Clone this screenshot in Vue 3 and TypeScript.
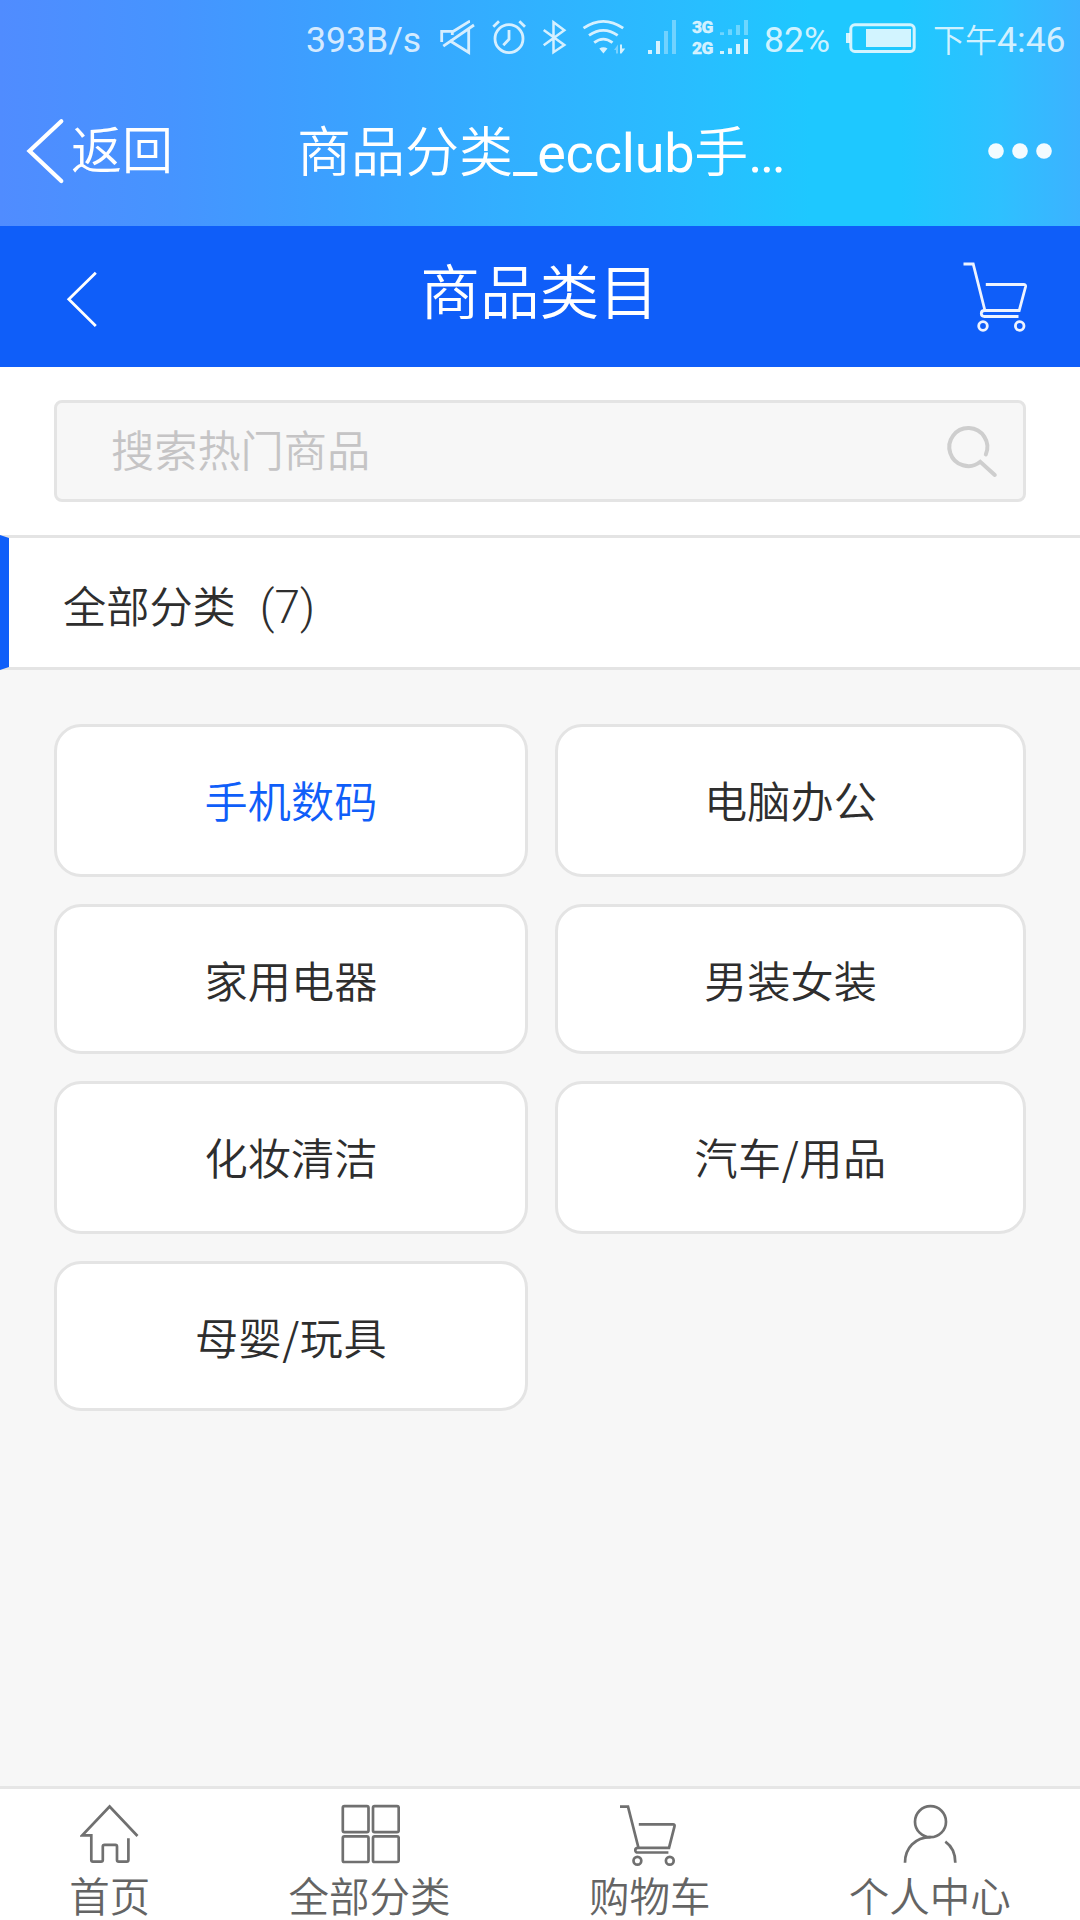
<script setup lang="ts">
import { ref } from 'vue'

interface Category {
  id: number
  name: string
}

const categories: Category[] = [
  { id: 1, name: '手机数码' },
  { id: 2, name: '电脑办公' },
  { id: 3, name: '家用电器' },
  { id: 4, name: '男装女装' },
  { id: 5, name: '化妆清洁' },
  { id: 6, name: '汽车/用品' },
  { id: 7, name: '母婴/玩具' },
]
const activeId = ref<number>(1)
</script>

<template>
  <div class="page">
    <div class="top">
      <div class="status">
        <span class="speed">393B/s</span>
        <svg class="icons" width="316" height="60" viewBox="436 8 316 60" fill="none" stroke="currentColor" stroke-width="2.8">
          <path d="M441.7 42V31.3H452.3V35M452.3 32L469 21.6H470M443.3 46.2L474 25M468.7 28V52.5L449.5 40.5" />
          <circle cx="509" cy="38.7" r="14" />
          <path d="M509 30V39.3L503.3 45.3M493.3 26.7L499 21.3M519.3 21.3L525 26.7" />
          <path d="M543.7 30L564.3 45L553.5 52.2V22.2L564.3 30.3L543.7 45.3" stroke-width="2.5" />
          <path d="M583.5 28.2Q603.3 14.5 623.2 28.2M589 35.3Q603.3 25.4 617.7 35.3M594.2 42.7Q603.3 35.6 612.5 42.7" />
          <path d="M599.3 48.5Q603.3 46 607.5 48.5L603.4 53.5Z" fill="currentColor" stroke="none" />
          <path d="M614 50L618 44.5V53.5H616V50Z" fill="currentColor" stroke="none" opacity=".45" />
          <path d="M620 44.5H622V48.5H625.2L621.5 53.5H620Z" fill="currentColor" stroke="none" />
          <g fill="currentColor" stroke="none">
            <path d="M648 50h4v4h-4zM656 41h4v13h-4z" />
            <path d="M664 31h4v23h-4zM672 20h4v34h-4z" opacity=".42" />
            <path d="M720 32.3h4v2.6h-4zM728 29.3h4v5.6h-4zM736 25h4v9.9h-4zM744 20h4v14.9h-4z" opacity=".42" />
            <path d="M720 51h4v3h-4zM728 48.3h4v5.7h-4zM736 44h4v10h-4zM744 39h4v15h-4z" />
            <text x="692" y="33" class="net">3G</text>
            <text x="692" y="54" class="net">2G</text>
          </g>
        </svg>
        <span class="percent">82%</span>
        <svg class="battery" width="72" height="32" viewBox="845 21 72 32">
          <rect x="850.8" y="23.8" width="63.4" height="26.6" rx="4" fill="none" stroke="currentColor" stroke-width="3" />
          <path d="M846 32h4v10h-4zM866 28h45v18h-45z" fill="currentColor" />
        </svg>
        <span class="time"><span class="noon">下午</span>4:46</span>
      </div>
      <div class="nav">
        <svg width="40" height="68" viewBox="26 117 40 68" fill="none" stroke="#fff" stroke-width="4.2" stroke-linecap="round">
          <path d="M61.3 121.3L29.5 151L61.3 181" />
        </svg>
        <span class="back">返回</span>
        <span class="title">商品分类<span class="latin">_ecclub</span>手<span class="dots">...</span></span>
        <svg class="more" width="66" height="18" viewBox="987 142 66 18" fill="#fff" fill-opacity=".94">
          <circle cx="996" cy="151" r="7.8" /><circle cx="1020" cy="151" r="7.8" /><circle cx="1044" cy="151" r="7.8" />
        </svg>
      </div>
    </div>

    <header class="header">
      <svg class="prev" width="32" height="58" viewBox="66 270 32 58" fill="none" stroke="#fff" stroke-width="2.8">
        <path d="M95.8 272.7L68.8 299.3L95.8 326" />
      </svg>
      <h1>商品类目</h1>
      <svg width="68" height="74" viewBox="960 260 68 74" fill="none" stroke="#fff" stroke-opacity=".93" stroke-width="2.8">
        <path d="M963.5 264H973.2L984.8 310M985.8 284.5H1023.5Q1026.1 284.5 1025.5 287L1019.2 310.5H984.5Q981.3 310.5 981.3 313.5T984.5 316.5H1018.5" />
        <circle cx="983" cy="326" r="4.3" /><circle cx="1019.7" cy="326" r="4.3" />
      </svg>
    </header>

    <div class="searchbar">
      <div class="search">
        <span>搜索热门商品</span>
        <svg width="54" height="54" viewBox="944 423 54 54" fill="none" stroke="#cecece" stroke-width="4" stroke-linecap="round">
          <path d="M985.8 453.5A19 19 0 1 0 980.3 460.8L994.8 474" />
        </svg>
      </div>
    </div>

    <div class="all">全部分类<span class="count">(7)</span></div>

    <main class="grid">
      <div
        v-for="c in categories"
        :key="c.id"
        class="card"
        :class="{ active: c.id === activeId, pair: c.name.includes('/') }"
        @click="activeId = c.id"
      >{{ c.name }}</div>
    </main>

    <footer class="tabs">
      <div class="tab">
        <svg width="60" height="64" viewBox="80 1803 60 64">
          <path d="M137.5 1836L109.6 1806.5L82.3 1835.3H91.3V1860Q91.3 1861.7 93 1861.7H101Q102.8 1861.7 102.8 1860V1846.5Q102.8 1844.8 104.5 1844.8H115.4Q117 1844.8 117 1846.5V1860Q117 1861.7 118.8 1861.7H126.7Q128.4 1861.7 128.4 1860V1838.3" />
        </svg>
        <span>首页</span>
      </div>
      <div class="tab">
        <svg width="60" height="64" viewBox="340 1803 60 64">
          <rect x="342.8" y="1806.2" width="25.7" height="26" rx="1.6" /><rect x="373" y="1806.2" width="25.7" height="26" rx="1.6" />
          <rect x="342.8" y="1836.3" width="25.7" height="25.7" rx="1.6" /><rect x="373" y="1836.3" width="25.7" height="25.7" rx="1.6" />
        </svg>
        <span>全部分类</span>
      </div>
      <div class="tab">
        <svg width="60" height="64" viewBox="620 1803 60 64">
          <path d="M620 1806.7H628L638.4 1847.5M638.8 1824.4H673Q675 1824.4 674.5 1826.4L669 1847.8H638Q635.3 1847.8 635.3 1850.2T638 1852.5H668.4" />
          <circle cx="637.4" cy="1860.7" r="3.9" /><circle cx="669.8" cy="1860.7" r="3.9" />
        </svg>
        <span>购物车</span>
      </div>
      <div class="tab">
        <svg width="60" height="64" viewBox="900 1803 60 64">
          <circle cx="930.5" cy="1821.7" r="15.5" />
          <path d="M930.5 1837.2C915 1837.5 905 1848 905 1862.7M945.3 1841.7C951.5 1846 955.3 1853 955.3 1862.7" />
        </svg>
        <span>个人中心</span>
      </div>
    </footer>
  </div>
</template>

<style>
body {
  background: #f7f7f7;
}
</style>

<style scoped>
.page {
  width: 1080px;
  height: 1920px;
  display: flex;
  flex-direction: column;
  background: #f7f7f7;
  color: #2e2e2e;
  font-family: Roboto, "Noto Sans CJK SC", sans-serif;
  overflow: hidden;
}
.page svg {
  display: block;
  flex: none;
}
.top {
  height: 226px;
  flex: none;
  background: linear-gradient(90deg, #508cff 0, #4694ff 170px, #3ba1ff 340px, #30b2ff 540px, #28beff 700px, #1ec8ff 810px, #1ec8ff 900px, #2ec0ff 1000px, #3cb2ff 1080px);
}
.status {
  display: flex;
  align-items: center;
  height: 76px;
  padding-left: 306px;
  color: rgba(255, 255, 255, 0.8);
  font-size: 35.6px;
  line-height: 42px;
  white-space: nowrap;
}
.status span {
  flex: none;
}
.speed {
  width: 130px;
  padding-top: 4px;
}
.percent {
  width: 81px;
  margin-left: 12px;
  padding-top: 4px;
}
.time {
  margin-left: 16px;
  padding-top: 4px;
}
.noon {
  font-size: 32px;
  font-weight: 350;
}
.net {
  font: 900 17.4px Roboto, sans-serif;
  letter-spacing: -0.5px;
  stroke: currentColor;
  stroke-width: 0.3px;
}
.nav {
  display: flex;
  align-items: center;
  height: 150px;
  padding: 0 27px 0 26px;
  color: #fff;
  white-space: nowrap;
}
.back {
  width: 226px;
  margin-left: 5px;
  padding-top: 2px;
  font-size: 51px;
  font-weight: 350;
  line-height: 60px;
}
.title {
  font-size: 54px;
  font-weight: 350;
  line-height: 64px;
  padding-top: 5px;
}
.latin {
  font-weight: 400;
  letter-spacing: -0.2px;
}
.dots {
  font-weight: 400;
  letter-spacing: -2.5px;
}
.more {
  margin-left: auto;
}
.header {
  flex: none;
  height: 141px;
  padding: 0 52px 0 66px;
  display: flex;
  align-items: center;
  justify-content: space-between;
  background: #0f5ef9;
  color: #fff;
}
.prev {
  margin-top: 5px;
}
.header h1 {
  margin: 0 0 6px 21px;
  font-size: 59.6px;
  font-weight: 350;
  line-height: 70px;
}
.searchbar {
  flex: none;
  height: 168px;
  padding: 33px 54px 0;
  box-sizing: border-box;
  background: #fff;
}
.search {
  height: 102px;
  box-sizing: border-box;
  border: 3px solid #e4e4e4;
  border-radius: 8px;
  background: #f7f7f7;
  padding: 0 25px 0 54px;
  display: flex;
  align-items: center;
  justify-content: space-between;
  font-size: 43.2px;
  font-weight: 350;
  color: #c5c4c5;
}
.search span {
  padding-bottom: 7px;
}
.all {
  flex: none;
  height: 135px;
  box-sizing: border-box;
  border: solid #e4e4e4;
  border-width: 3px 0 3px 9px;
  border-left-color: #0f5ef9;
  background: #fff;
  padding: 8px 0 0 54px;
  font-size: 43.2px;
  font-weight: 350;
  line-height: 123px;
}
.count {
  margin-left: 24px;
  font-size: 46px;
}
.grid {
  flex: 1;
  display: grid;
  grid-template-columns: 474px 471px;
  grid-template-rows: 153px 150px 153px 150px;
  gap: 27px;
  padding: 54px;
}
.card {
  box-sizing: border-box;
  border: 3px solid #e4e4e4;
  border-radius: 27px;
  background: #fff;
  font-family: "Noto Sans CJK SC", sans-serif;
  font-size: 43.2px;
  font-weight: 350;
  line-height: 145px;
  text-align: center;
}
.card.pair {
  letter-spacing: 0.5px;
}
.card.active {
  color: #0f5ef9;
}
.tabs {
  flex: none;
  height: 134px;
  box-sizing: border-box;
  border-top: 3px solid #e6e6e6;
  background: #fff;
  display: flex;
  justify-content: space-around;
  color: #646464;
  font-size: 40.5px;
  font-weight: 350;
}
.tab {
  display: flex;
  flex-direction: column;
  align-items: center;
  padding-top: 14px;
}
.tab svg {
  fill: none;
  stroke: #707070;
  stroke-width: 2.7px;
}
.tab span {
  line-height: 44px;
  margin-top: 9px;
  white-space: nowrap;
}
</style>
